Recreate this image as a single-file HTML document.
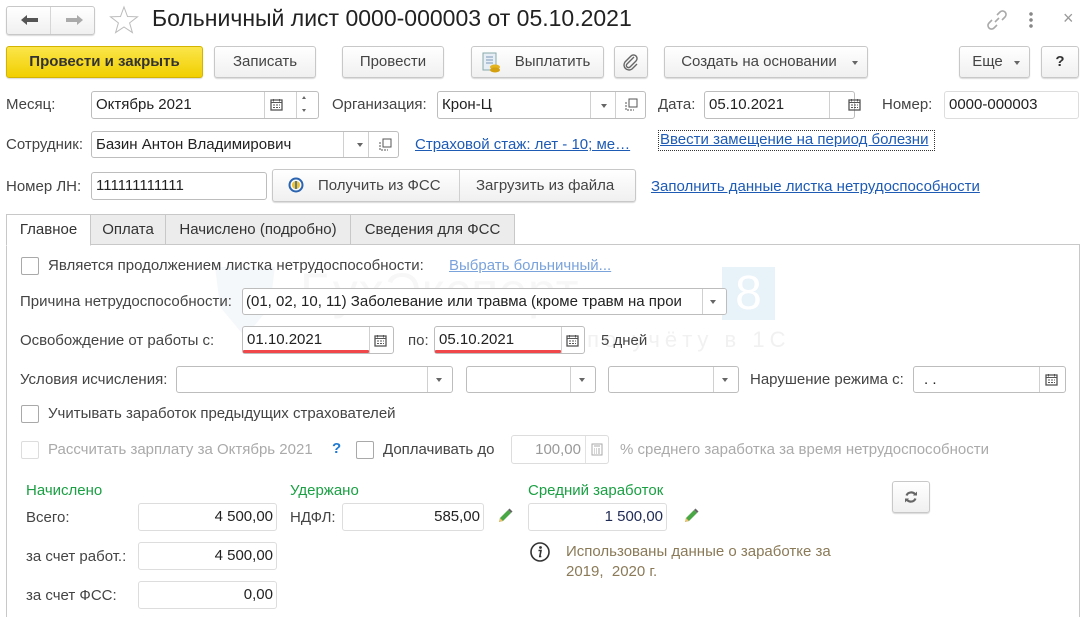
<!DOCTYPE html>
<html><head><meta charset="utf-8">
<style>
*{box-sizing:border-box;margin:0;padding:0}
html{width:1086px;height:617px;overflow:hidden}
body{width:1086px;height:617px;background:#fff;font-family:"Liberation Sans",Arial,sans-serif;font-size:15px;color:#333;position:relative;overflow:hidden}
.a{position:absolute;white-space:nowrap}
.btn{position:absolute;border:1px solid #c8c8c8;border-radius:3px;background:linear-gradient(#fff,#f0f0f0);box-shadow:0 1px 1px rgba(0,0,0,.15);color:#444;text-align:center;font-size:15px}
.f{position:absolute;border:1px solid #bdbdbd;border-radius:3px;background:#fff;color:#222;padding-left:4px;overflow:hidden;white-space:nowrap}
.sep{position:absolute;top:0;bottom:0;border-left:1px solid #d0d0d0}
.lbl{position:absolute;white-space:nowrap;color:#444}
.lnk{position:absolute;white-space:nowrap;color:#1e5bb5;text-decoration:underline}
.dd{position:absolute;width:0;height:0;border-left:3.5px solid transparent;border-right:3.5px solid transparent;border-top:4px solid #666}
.cb{position:absolute;width:18px;height:18px;border:1px solid #a9a9a9;border-radius:2px;background:#fff}
.tab{position:absolute;top:214px;height:31px;border:1px solid #c8c8c8;background:#ececec;color:#333;text-align:center;line-height:29px}
.g{color:#1aa043}
.num{text-align:right;padding-right:3px}
</style></head><body>

<!-- watermark -->
<div class="a" style="left:300px;top:262px;font-size:50px;color:#f7f7f7;letter-spacing:1px">БухЭксперт</div>
<div class="a" style="left:722px;top:267px;width:53px;height:53px;background:#e8f2f9;color:#fff;font-size:48px;text-align:center;line-height:53px">8</div>
<div class="a" style="left:470px;top:327px;font-size:22px;color:#f1f1f1;letter-spacing:5px">Ответы по учёту в 1С</div>
<svg class="a" style="left:210px;top:262px" width="70" height="80"><path d="M5 5 L65 5 L60 45 Q35 75 35 75 Q10 45 10 45 Z" fill="#f5f8fa"/></svg>

<!-- header -->
<div class="btn" style="left:6px;top:6px;width:89px;height:29px"></div>
<div class="a" style="left:50px;top:7px;height:27px;border-left:1px solid #d6d6d6"></div>
<svg class="a" style="left:20px;top:14px" width="20" height="12"><path d="M1 6 L7 1 L7 4 L18 4 L18 8 L7 8 L7 11 Z" fill="#555"/></svg>
<svg class="a" style="left:64px;top:14px" width="20" height="12"><path d="M19 6 L13 1 L13 4 L2 4 L2 8 L13 8 L13 11 Z" fill="#aaa"/></svg>
<svg class="a" style="left:109px;top:5px" width="30" height="30"><path d="M15 2 L18.5 11.5 L28.5 11.8 L20.6 17.9 L23.4 27.6 L15 22 L6.6 27.6 L9.4 17.9 L1.5 11.8 L11.5 11.5 Z" fill="none" stroke="#bbb" stroke-width="1"/></svg>
<div class="a" style="left:152px;top:5px;font-size:23px;color:#222">Больничный лист 0000-000003 от 05.10.2021</div>
<svg class="a" style="left:986px;top:9px" width="22" height="22"><g fill="none" stroke="#aaa" stroke-width="1.6"><path d="M9 13 L13 9"/><path d="M11 6 L14 3 a3.5 3.5 0 0 1 5 5 L16 11"/><path d="M11 16 L8 19 a3.5 3.5 0 0 1 -5 -5 L6 11"/></g></svg>
<div class="a" style="left:1029px;top:11px;width:4px;height:18px;background:radial-gradient(circle,#888 1.6px,transparent 2px) 0 0/4px 6px"></div>
<div class="a" style="left:1063px;top:8px;font-size:18px;color:#999">×</div>

<!-- toolbar -->
<div class="btn" style="left:6px;top:46px;width:197px;height:32px;background:linear-gradient(#fbe54a,#f1cf00);border-color:#d3b400;font-weight:bold;color:#333;line-height:30px">Провести и закрыть</div>
<div class="btn" style="left:214px;top:46px;width:102px;height:32px;line-height:30px">Записать</div>
<div class="btn" style="left:342px;top:46px;width:102px;height:32px;line-height:30px">Провести</div>
<div class="btn" style="left:471px;top:46px;width:133px;height:32px;line-height:30px;padding-left:30px">Выплатить</div>
<svg class="a" style="left:481px;top:52px" width="22" height="22"><rect x="2" y="1" width="13" height="17" fill="#e8eef6" stroke="#8aa"/><path d="M5 5h7M5 8h7M5 11h7" stroke="#7a9ab8"/><ellipse cx="14" cy="15" rx="5" ry="2.5" fill="#e3b320"/><ellipse cx="14" cy="18" rx="5" ry="2.5" fill="#d4a010"/></svg>
<div class="btn" style="left:614px;top:46px;width:34px;height:32px"></div>
<svg class="a" style="left:622px;top:53px" width="18" height="18"><path d="M12 4 L5 11 a2 2 0 0 0 3 3 L14 8 a3.5 3.5 0 0 0 -5 -5 L3 9 a5 5 0 0 0 7 7 L15 11" fill="none" stroke="#666" stroke-width="1.4"/></svg>
<div class="btn" style="left:664px;top:46px;width:204px;height:32px;line-height:30px;padding-right:14px">Создать на основании</div>
<div class="dd" style="left:852px;top:61px"></div>
<div class="btn" style="left:959px;top:46px;width:71px;height:32px;line-height:30px;padding-right:14px">Еще</div>
<div class="dd" style="left:1014px;top:61px"></div>
<div class="btn" style="left:1041px;top:46px;width:38px;height:32px;line-height:30px;font-weight:bold;color:#333">?</div>

<!-- row month -->
<div class="lbl" style="left:6px;top:96px">Месяц:</div>
<div class="f" style="left:91px;top:91px;width:228px;height:28px;line-height:26px">Октябрь 2021<div class="sep" style="left:172px"></div><div class="sep" style="left:204px"></div></div>
<svg class="a" style="left:270px;top:98px" width="13" height="13"><rect x="1" y="2" width="11" height="10" fill="none" stroke="#555" stroke-width="1.3"/><path d="M1 4.5h11M3.5 1v2.5M9.5 1v2.5M3 7h2M6 7h2M9 7h1M3 9.5h2M6 9.5h2M9 9.5h1" stroke="#555"/></svg>
<div class="a" style="left:302px;top:96px;width:0;height:0;border-left:2.5px solid transparent;border-right:2.5px solid transparent;border-bottom:3px solid #666"></div>
<div class="a" style="left:302px;top:109px;width:0;height:0;border-left:2.5px solid transparent;border-right:2.5px solid transparent;border-top:3px solid #666"></div>
<div class="lbl" style="left:332px;top:96px">Организация:</div>
<div class="f" style="left:437px;top:91px;width:209px;height:28px;line-height:26px">Крон-Ц<div class="sep" style="left:152px"></div><div class="sep" style="left:177px"></div></div>
<div class="dd" style="left:601px;top:104px"></div>
<svg class="a" style="left:625px;top:98px" width="13" height="13"><rect x="4" y="1" width="8" height="8" fill="none" stroke="#555"/><path d="M1 4v8h8" fill="none" stroke="#555" stroke-dasharray="2 1"/></svg>
<div class="lbl" style="left:658px;top:96px">Дата:</div>
<div class="f" style="left:704px;top:91px;width:151px;height:28px;line-height:26px">05.10.2021<div class="sep" style="left:124px"></div></div>
<svg class="a" style="left:848px;top:98px" width="13" height="13"><rect x="1" y="2" width="11" height="10" fill="none" stroke="#555" stroke-width="1.3"/><path d="M1 4.5h11M3.5 1v2.5M9.5 1v2.5M3 7h2M6 7h2M9 7h1M3 9.5h2M6 9.5h2M9 9.5h1" stroke="#555"/></svg>
<div class="lbl" style="left:882px;top:96px">Номер:</div>
<div class="f" style="left:944px;top:91px;width:135px;height:28px;line-height:26px;border-color:#ddd">0000-000003</div>

<!-- row employee -->
<div class="lbl" style="left:6px;top:136px">Сотрудник:</div>
<div class="f" style="left:91px;top:131px;width:308px;height:27px;line-height:25px">Базин Антон Владимирович<div class="sep" style="left:251px"></div><div class="sep" style="left:276px"></div></div>
<div class="dd" style="left:357px;top:143px"></div>
<svg class="a" style="left:379px;top:138px" width="13" height="13"><rect x="4" y="1" width="8" height="8" fill="none" stroke="#555"/><path d="M1 4v8h8" fill="none" stroke="#555" stroke-dasharray="2 1"/></svg>
<div class="lnk" style="left:415px;top:136px">Страховой стаж: лет - 10; ме…</div>
<div class="lnk" style="left:658px;top:130px;border:1px dotted #333;padding:0 6px 1px 1px;line-height:18px">Ввести замещение на период болезни</div>

<!-- row LN -->
<div class="lbl" style="left:6px;top:178px">Номер ЛН:</div>
<div class="f" style="left:91px;top:172px;width:176px;height:28px;line-height:26px">111111111111</div>
<div class="btn" style="left:272px;top:169px;width:364px;height:33px"></div>
<div class="a" style="left:459px;top:170px;height:31px;border-left:1px solid #d0d0d0"></div>
<svg class="a" style="left:288px;top:177px" width="16" height="16"><circle cx="8" cy="8" r="6.5" fill="none" stroke="#2a64b0" stroke-width="2"/><circle cx="8" cy="8" r="4" fill="#f2c230"/><path d="M8 4v8" stroke="#2a64b0" stroke-width="1.5"/></svg>
<div class="a" style="left:318px;top:177px;color:#444">Получить из ФСС</div>
<div class="a" style="left:476px;top:177px;color:#444">Загрузить из файла</div>
<div class="lnk" style="left:651px;top:178px">Заполнить данные листка нетрудоспособности</div>

<!-- tabs -->
<div class="a" style="left:6px;top:244px;width:1074px;height:373px;border:1px solid #c8c8c8;border-bottom:none"></div>
<div class="tab" style="left:90px;width:76px">Оплата</div>
<div class="tab" style="left:165px;width:186px">Начислено (подробно)</div>
<div class="tab" style="left:350px;width:165px">Сведения для ФСС</div>
<div class="tab" style="left:6px;width:85px;background:#fff;border-bottom-color:#fff;height:32px">Главное</div>

<!-- panel -->
<div class="cb" style="left:21px;top:257px"></div>
<div class="lbl" style="left:48px;top:257px">Является продолжением листка нетрудоспособности:</div>
<div class="lnk" style="left:449px;top:257px;color:#7aa3dc">Выбрать больничный...</div>

<div class="lbl" style="left:20px;top:293px">Причина нетрудоспособности:</div>
<div class="f" style="left:242px;top:288px;width:485px;height:27px;line-height:25px;padding-left:3px">(01, 02, 10, 11) Заболевание или травма (кроме травм на прои<div class="a" style="left:459px;top:0;width:25px;height:25px;background:#fff;border-left:1px solid #d0d0d0"></div></div>
<div class="dd" style="left:710px;top:300px"></div>

<div class="lbl" style="left:20px;top:332px">Освобождение от работы с:</div>
<div class="f" style="left:242px;top:326px;width:152px;height:28px;line-height:26px">01.10.2021<div class="sep" style="left:126px"></div></div>
<div class="a" style="left:243px;top:350px;width:126px;height:3px;background:#f0474a;border-radius:1px"></div>
<svg class="a" style="left:374px;top:334px" width="13" height="13"><rect x="1" y="2" width="11" height="10" fill="none" stroke="#555" stroke-width="1.3"/><path d="M1 4.5h11M3.5 1v2.5M9.5 1v2.5M3 7h2M6 7h2M9 7h1M3 9.5h2M6 9.5h2M9 9.5h1" stroke="#555"/></svg>
<div class="lbl" style="left:408px;top:332px">по:</div>
<div class="f" style="left:434px;top:326px;width:151px;height:28px;line-height:26px">05.10.2021<div class="sep" style="left:126px"></div></div>
<div class="a" style="left:435px;top:350px;width:126px;height:3px;background:#f0474a;border-radius:1px"></div>
<svg class="a" style="left:566px;top:334px" width="13" height="13"><rect x="1" y="2" width="11" height="10" fill="none" stroke="#555" stroke-width="1.3"/><path d="M1 4.5h11M3.5 1v2.5M9.5 1v2.5M3 7h2M6 7h2M9 7h1M3 9.5h2M6 9.5h2M9 9.5h1" stroke="#555"/></svg>
<div class="lbl" style="left:601px;top:332px">5 дней</div>

<div class="lbl" style="left:20px;top:371px">Условия исчисления:</div>
<div class="f" style="left:176px;top:366px;width:277px;height:27px"><div class="sep" style="left:250px"></div></div>
<div class="dd" style="left:436px;top:378px"></div>
<div class="f" style="left:466px;top:366px;width:130px;height:27px"><div class="sep" style="left:103px"></div></div>
<div class="dd" style="left:579px;top:378px"></div>
<div class="f" style="left:608px;top:366px;width:131px;height:27px"><div class="sep" style="left:104px"></div></div>
<div class="dd" style="left:722px;top:378px"></div>
<div class="lbl" style="left:750px;top:371px">Нарушение режима с:</div>
<div class="f" style="left:913px;top:366px;width:153px;height:27px;line-height:25px;padding-left:10px">. .<div class="sep" style="left:125px"></div></div>
<svg class="a" style="left:1045px;top:373px" width="13" height="13"><rect x="1" y="2" width="11" height="10" fill="none" stroke="#555" stroke-width="1.3"/><path d="M1 4.5h11M3.5 1v2.5M9.5 1v2.5M3 7h2M6 7h2M9 7h1M3 9.5h2M6 9.5h2M9 9.5h1" stroke="#555"/></svg>

<div class="cb" style="left:21px;top:405px"></div>
<div class="lbl" style="left:48px;top:405px">Учитывать заработок предыдущих страхователей</div>

<div class="cb" style="left:21px;top:441px;border-color:#ddd"></div>
<div class="lbl" style="left:48px;top:441px;color:#aaa">Рассчитать зарплату за Октябрь 2021</div>
<div class="a" style="left:332px;top:440px;color:#1e7ad0;font-weight:bold">?</div>
<div class="cb" style="left:356px;top:441px"></div>
<div class="lbl" style="left:383px;top:441px">Доплачивать до</div>
<div class="f" style="left:511px;top:435px;width:98px;height:29px;line-height:27px;border-color:#ddd;color:#999;text-align:right;padding-right:27px">100,00<div class="sep" style="left:73px;border-color:#e2e2e2"></div></div>
<svg class="a" style="left:591px;top:443px" width="12" height="13"><rect x="1" y="1" width="10" height="11" fill="none" stroke="#aaa"/><path d="M3 3h6M3 6h1M5 6h1M7 6h2M3 8h1M5 8h1M7 8h2M3 10h1M5 10h1M7 10h2" stroke="#aaa"/></svg>
<div class="lbl" style="left:620px;top:441px;color:#aaa">% среднего заработка за время нетрудоспособности</div>

<div class="lbl g" style="left:26px;top:482px">Начислено</div>
<div class="lbl g" style="left:290px;top:482px">Удержано</div>
<div class="lbl g" style="left:528px;top:482px">Средний заработок</div>
<div class="btn" style="left:892px;top:481px;width:38px;height:32px"></div>
<svg class="a" style="left:903px;top:489px" width="16" height="16"><path d="M12.5 6 A5 5 0 0 0 3.5 6.5 M3.5 10 A5 5 0 0 0 12.5 9.5" fill="none" stroke="#666" stroke-width="2.2"/><path d="M10 6.5h4v-4z M6 9.5h-4v4z" fill="#666"/></svg>

<div class="lbl" style="left:26px;top:509px">Всего:</div>
<div class="f num" style="left:138px;top:503px;width:139px;height:28px;line-height:26px;border-color:#ddd">4 500,00</div>
<div class="lbl" style="left:290px;top:509px">НДФЛ:</div>
<div class="f num" style="left:342px;top:503px;width:142px;height:28px;line-height:26px;border-color:#ddd">585,00</div>
<svg class="a" style="left:496px;top:507px" width="18" height="18"><path d="M3 15 L4 11 L12 3 L15 6 L7 14 Z" fill="#49a745"/><path d="M12 3 L13.5 1.5 L16.5 4.5 L15 6 Z" fill="#666"/><path d="M3 15 L4 11 L7 14 Z" fill="#f0c070"/></svg>
<div class="f num" style="left:528px;top:503px;width:139px;height:28px;line-height:26px;border-color:#ddd;color:#1f2a55">1 500,00</div>
<svg class="a" style="left:682px;top:507px" width="18" height="18"><path d="M3 15 L4 11 L12 3 L15 6 L7 14 Z" fill="#49a745"/><path d="M12 3 L13.5 1.5 L16.5 4.5 L15 6 Z" fill="#666"/><path d="M3 15 L4 11 L7 14 Z" fill="#f0c070"/></svg>

<div class="lbl" style="left:26px;top:548px">за счет работ.:</div>
<div class="f num" style="left:138px;top:542px;width:139px;height:28px;line-height:26px;border-color:#ddd">4 500,00</div>
<svg class="a" style="left:529px;top:541px" width="22" height="22"><circle cx="11" cy="11" r="9" fill="none" stroke="#333" stroke-width="1.6"/><circle cx="11.5" cy="6.5" r="1.4" fill="#333"/><path d="M9.5 9.5h2.5l-1.2 6h1.5" fill="none" stroke="#333" stroke-width="1.6"/></svg>
<div class="lbl" style="left:566px;top:543px;color:#8a7a58">Использованы данные о заработке за</div>
<div class="lbl" style="left:566px;top:563px;color:#8a7a58">2019,&nbsp; 2020 г.</div>

<div class="lbl" style="left:26px;top:587px">за счет ФСС:</div>
<div class="f num" style="left:138px;top:581px;width:139px;height:28px;line-height:26px;border-color:#ddd">0,00</div>

</body></html>
